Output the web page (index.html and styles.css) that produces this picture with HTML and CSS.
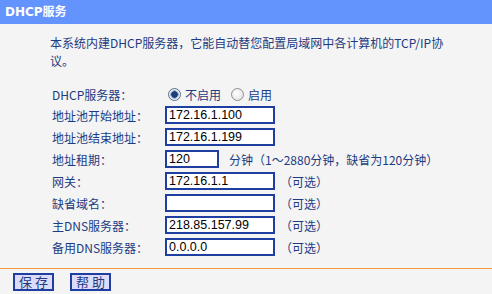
FILE: index.html
```html
<!DOCTYPE html>
<html lang="zh-CN">
<head>
<meta charset="utf-8">
<title>DHCP服务</title>
<link rel="stylesheet" href="styles.css">
</head>
<body>
<div class="page">
  <div class="title-bar">DHCP服务</div>
  <p class="intro">本系统内建DHCP服务器，它能自动替您配置局域网中各计算机的TCP/IP协议。</p>
  <div class="form">
    <div class="label radio-row">DHCP服务器：</div>
    <div class="field radio-row">
      <label class="radio"><span class="dot checked"></span>不启用</label>
      <label class="radio"><span class="dot"></span>启用</label>
    </div>

    <div class="label">地址池开始地址：</div>
    <div class="field"><span class="input">172.16.1.100</span></div>

    <div class="label">地址池结束地址：</div>
    <div class="field"><span class="input">172.16.1.199</span></div>

    <div class="label">地址租期：</div>
    <div class="field"><span class="input short">120</span><span class="note lease">分钟（1～2880分钟，缺省为120分钟）</span></div>

    <div class="label">网关：</div>
    <div class="field"><span class="input">172.16.1.1</span><span class="note">（可选）</span></div>

    <div class="label">缺省域名：</div>
    <div class="field"><span class="input"></span><span class="note">（可选）</span></div>

    <div class="label">主DNS服务器：</div>
    <div class="field"><span class="input">218.85.157.99</span><span class="note">（可选）</span></div>

    <div class="label">备用DNS服务器：</div>
    <div class="field"><span class="input">0.0.0.0</span><span class="note">（可选）</span></div>
  </div>
  <div class="divider"></div>
  <div class="buttons">
    <span class="btn">保存</span>
    <span class="btn">帮助</span>
  </div>
</div>
</body>
</html>
```

FILE: styles.css
```css
html, body {
  margin: 0;
  padding: 0;
  background: #f4f4f4;
}
body {
  font-family: "DejaVu Sans", "Noto Sans CJK SC", sans-serif;
  font-size: 12px;
  color: #1d3b82;
  width: 492px;
  height: 294px;
  overflow: hidden;
}
.title-bar {
  height: 24px;
  line-height: 24px;
  background: #6393fd;
  color: #ffffff;
  font-weight: bold;
  padding-left: 5px;
  font-size: 12px;
}
.intro {
  margin: 10px 40px 0 50px;
  line-height: 18px;
  font-family: "Noto Sans CJK SC", sans-serif;
}
.form {
  display: grid;
  grid-template-columns: 113px auto;
  grid-auto-rows: 22px;
  padding-left: 52px;
  margin-top: 12px;
}
.label {
  display: flex;
  align-items: center;
  font-family: "Noto Sans CJK SC", sans-serif;
}
.radio-row {
  height: 24px;
}
.field {
  display: flex;
  align-items: center;
}
.radio {
  display: flex;
  align-items: center;
  margin-right: 10px;
  font-family: "Noto Sans CJK SC", sans-serif;
}
.radio:first-child {
  margin-left: 3px;
}
.dot {
  width: 11px;
  height: 11px;
  border-radius: 50%;
  border: 1px solid #8f8f8f;
  background: radial-gradient(circle at 40% 40%, #ffffff, #dcdcdc);
  margin-right: 4px;
  position: relative;
  box-sizing: content-box;
}
.dot.checked {
  border-color: #5e6f8a;
  background: radial-gradient(circle, #1f3f78 0 3px, #9bb4d8 3.5px 4px, #e8eef7 4.5px);
}
.input {
  box-sizing: border-box;
  width: 110px;
  height: 18px;
  border: 2px solid #1f3fa0;
  background: #ffffff;
  color: #000000;
  font-family: "Liberation Sans", Arial, sans-serif;
  font-size: 12.5px;
  line-height: 14px;
  padding-left: 2px;
}
.input.short {
  width: 54px;
}
.note {
  margin-left: 5px;
  font-family: "Noto Sans CJK SC", sans-serif;
}
.note.lease {
  margin-left: 10px;
}
.divider {
  height: 1px;
  background: #f5963f;
  margin-top: 10px;
}
.buttons {
  display: flex;
  gap: 16px;
  padding-left: 13px;
  margin-top: 4px;
}
.btn {
  box-sizing: border-box;
  width: 41px;
  height: 18px;
  border: 2px solid #1f3fa0;
  background: #dcdcfa;
  color: #1d3b82;
  font-family: "Noto Sans CJK SC", sans-serif;
  font-size: 13px;
  line-height: 14px;
  text-align: center;
  letter-spacing: 3px;
  padding-left: 3px;
  white-space: nowrap;
  overflow: hidden;
}
```
